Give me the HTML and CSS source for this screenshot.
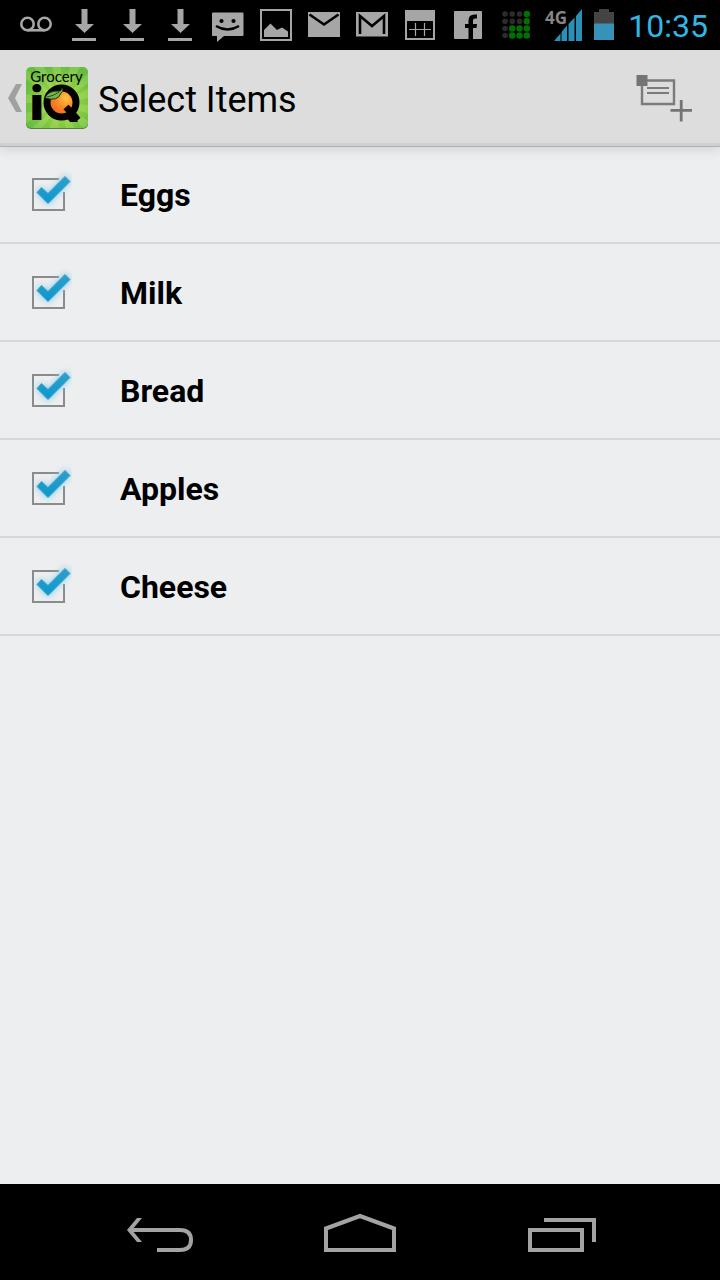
FILE: index.html
```html
<!DOCTYPE html>
<html lang="en">
<head>
<meta charset="utf-8">
<meta name="viewport" content="width=device-width, initial-scale=1">
<title>Select Items</title>
<link rel="stylesheet" href="styles.css">
</head>
<body>
<svg class="defs" width="0" height="0" aria-hidden="true">
  <defs>
    <linearGradient id="tickFill" x1="0" y1="0" x2="0" y2="1">
      <stop offset="0" stop-color="#2f9fcb"/><stop offset="1" stop-color="#0798d2"/>
    </linearGradient>
    <symbol id="download" viewBox="0 0 48 50">
      <path d="M21.500 9h6v15h6.500L24.500 33 15 24h6.500zM12 38h24v3H12z" fill="#a6a6a6"/>
    </symbol>
    <symbol id="tick" viewBox="0 0 48 48">
      <path d="M35 9h5v13" fill="none" stroke="#edeef0" stroke-width="3"/>
      <path class="glow" d="M12 22l5-5 7 6L41 5l6 6L24 35z" fill="#7fd0ee"/>
      <path d="M13 22.500l4.500-5 6.500 6L41 6.500l5 5L24 33.500z" fill="url(#tickFill)" stroke="#4d9dbb" stroke-width="1"/>
    </symbol>
  </defs>
</svg>

<div class="status">
  <svg class="cell" viewBox="0 0 48 50" fill="none" stroke="#a6a6a6" stroke-width="2.600"><circle cx="15.500" cy="24" r="6.200"/><circle cx="32.500" cy="24" r="6.200"/><path d="M15 30.300h18"/></svg>
  <svg class="cell"><use href="#download"/></svg>
  <svg class="cell"><use href="#download"/></svg>
  <svg class="cell"><use href="#download"/></svg>
  <svg class="cell" viewBox="0 0 48 50"><path d="M9 12.500h29.500q1 0 1 1V35q0 1-1 1H20l-7 6v-6H9q-1 0-1-1V13.500q0-1 1-1z" fill="#a6a6a6"/><circle cx="17.500" cy="21" r="2.100"/><circle cx="29.500" cy="21" r="2.100"/><path d="M12 26q11.500 7 23 0" fill="none" stroke="#000" stroke-width="2.400"/></svg>
  <svg class="cell" viewBox="0 0 48 50"><path d="M9 10h30v30H9z" fill="none" stroke="#a6a6a6" stroke-width="2"/><path d="M12 37v-7l6.500-6.500L25 30l5-2.500 6 4V37z" fill="#a6a6a6"/></svg>
  <svg class="cell" viewBox="0 0 48 50"><path d="M8 12h32v25H8z" fill="#a6a6a6"/><path d="M9.500 14.500L24 24.500l14.500-10" fill="none" stroke="#000" stroke-width="2.600"/></svg>
  <svg class="cell" viewBox="0 0 48 50"><path d="M8 12h32v24.500H8z" fill="#a6a6a6"/><path d="M12 34V16l12 10 12-10v18" fill="none" stroke="#000" stroke-width="2.600"/></svg>
  <svg class="cell" viewBox="0 0 48 50"><path d="M9 10h30v30H9z" fill="#a6a6a6"/><path d="M11 21h26v17H11z"/><path d="M13 29.500h22M19.500 23v13M28.500 23v13" stroke="#a6a6a6" stroke-width="1.200"/></svg>
  <svg class="cell" viewBox="0 0 48 50"><path d="M11 11h26q1 0 1 1v26q0 1-1 1H11q-1 0-1-1V12q0-1 1-1z" fill="#a6a6a6"/><path d="M24.500 39V28H21v-4h3.500v-3.500q0-6 6-6H33v4h-2q-2 0-2 2V24h4l-.5 4H29v11z"/></svg>
  <svg class="cell" viewBox="0 0 48 50"><g fill="#2b2b2b"><circle cx="13" cy="14" r="2.800"/><circle cx="20.200" cy="14" r="2.800"/><circle cx="27.500" cy="14" r="2.800"/><circle cx="13" cy="21.300" r="2.800"/><circle cx="20.200" cy="21.300" r="2.800"/><circle cx="27.500" cy="21.300" r="2.800"/><circle cx="13" cy="28.500" r="2.800"/><circle cx="13" cy="35.500" r="2.800"/></g><g fill="#007000"><circle cx="34.800" cy="14" r="3.200"/><circle cx="34.800" cy="21.300" r="3.200"/><circle cx="20.200" cy="28.500" r="3.200"/><circle cx="27.500" cy="28.500" r="3.200"/><circle cx="34.800" cy="28.500" r="3.200"/><circle cx="20.200" cy="35.500" r="3.200"/><circle cx="27.500" cy="35.500" r="3.200"/><circle cx="34.800" cy="35.500" r="3.200"/></g></svg>
  <svg class="cell" viewBox="0 0 48 50"><path d="M14 41l6.500-7.500V41zM21.500 32l5.500-6.500V41h-5.500zM28.500 24l6-6.500V41h-6zM36 16l6-7v32h-6z" fill="#2b8fb8"/><text class="net" x="5" y="24">4G</text></svg>
  <svg class="battery" viewBox="0 0 32 50"><path d="M6 12h5V9h10v3h5v12H6z" fill="#444"/><path d="M6 23.500h20V40H6z" fill="#3792b8"/></svg>
  <time class="clock">10:35</time>
</div>

<header class="bar">
  <a class="up" href="#" aria-label="Navigate up">
    <svg class="chevron" viewBox="0 0 14 28"><path d="M8 0h6L7 14l7 14H8L0 14z" fill="#a0a0a0"/></svg>
    <svg class="logo" viewBox="0 0 62 62">
      <defs>
        <radialGradient id="leafy" cx=".55" cy=".58" r=".6"><stop offset="0" stop-color="#b5df45"/><stop offset="1" stop-color="#68bd41"/></radialGradient>
        <radialGradient id="fruit" cx=".65" cy=".35" r=".65"><stop offset="0" stop-color="#ffc246"/><stop offset=".5" stop-color="#f98a25"/><stop offset="1" stop-color="#ef6421"/></radialGradient>
        <clipPath id="tile"><rect width="62" height="61" rx="5"/></clipPath>
      </defs>
      <rect y="1" width="62" height="61" rx="5" fill="#55803d"/>
      <g clip-path="url(#tile)">
        <path d="M0 0h62v61H0z" fill="url(#leafy)"/>
        <path d="M35 36L0 2v10zM35 36L8 0h10zM35 36L26 0h9zM35 36L44 0h10zM35 36l27-30v10zM35 36l27-14v9zM35 36l27 2v9zM35 36l27 18v8h-4zM35 36l14 26h-9zM35 36l-3 26h-9zM35 36L15 62H5zM35 36L0 56V46zM35 36L0 36v-9z" fill="#d5f08a" opacity=".22"/>
      </g>
      <text class="brand" x="30.500" y="15" text-anchor="middle">Grocery</text>
      <text class="iq" x="4" y="53">iQ</text>
      <circle cx="35.500" cy="35.500" r="14.500" fill="url(#fruit)" stroke="#000" stroke-width="7"/>
      <path d="M40 40l12 13" stroke="#000" stroke-width="7"/>
      <path d="M19 31q3-8 15-7 2-1 2-3l1 1q0 3-2 4-3 9-16 5z" fill="#76b64b" stroke="#17320c" stroke-width="1"/>
      <path d="M21 30q7-1 12-5" fill="none" stroke="#17320c" stroke-width=".8"/>
    </svg>
  </a>
  <h1 class="title">Select Items</h1>
  <button class="action" type="button" aria-label="Add list">
    <svg viewBox="0 0 112 96"><path d="M34 30.500h32V54H34z" fill="none" stroke="#7b7b7b" stroke-width="2.400"/><path d="M28.500 25H39.500v11H28.500z" fill="#747474"/><path d="M39 38h22M39 43h22" stroke="#7b7b7b" stroke-width="2"/><path d="M62.500 60.300h21.500M73.200 50v21.500" stroke="#747474" stroke-width="2.800"/></svg>
  </button>
</header>

<main class="content">
  <ul class="list">
    <li><label class="row"><span class="check"><input type="checkbox" checked><svg><use href="#tick"/></svg></span><span class="name">Eggs</span></label></li>
    <li><label class="row"><span class="check"><input type="checkbox" checked><svg><use href="#tick"/></svg></span><span class="name">Milk</span></label></li>
    <li><label class="row"><span class="check"><input type="checkbox" checked><svg><use href="#tick"/></svg></span><span class="name">Bread</span></label></li>
    <li><label class="row"><span class="check"><input type="checkbox" checked><svg><use href="#tick"/></svg></span><span class="name">Apples</span></label></li>
    <li><label class="row"><span class="check"><input type="checkbox" checked><svg><use href="#tick"/></svg></span><span class="name">Cheese</span></label></li>
  </ul>
</main>

<nav class="nav">
  <button type="button" aria-label="Back"><svg viewBox="0 0 80 96"><path d="M22 34h-5L7 46l10 12h5L12 46z"/><path d="M11 46h49q11 0 11 10t-11 10H37" class="line"/></svg></button>
  <button type="button" aria-label="Home"><svg viewBox="0 0 80 96"><path class="line" d="M6 44.500L40 32l34 12.500V66H6z"/></svg></button>
  <button type="button" aria-label="Recent apps"><svg viewBox="0 0 80 96"><path class="line" d="M10 46h52v20H10zM24 36h50v22"/></svg></button>
</nav>
</body>
</html>
```
FILE: styles.css
```css
* {
  box-sizing: border-box;
}

body {
  margin: 0;
  min-height: 100vh;
  display: flex;
  flex-direction: column;
  background: #edeef0;
  color: #000;
  font-family: Roboto, "Liberation Sans", sans-serif;
}

.defs {
  position: absolute;
}

svg {
  display: block;
}

button {
  border: 0;
  padding: 0;
  background: none;
  cursor: pointer;
}

.status {
  display: flex;
  align-items: center;
  height: 50px;
  padding: 0 12px;
  background: #000;
}

.cell {
  width: 48px;
  height: 50px;
  flex: none;
}

.battery {
  width: 32px;
  height: 50px;
  flex: none;
}

.net {
  font: 700 17px "Open Sans", sans-serif;
  fill: #858585;
}

.clock {
  margin-left: auto;
  padding-top: 2px;
  font-size: 32px;
  line-height: 48px;
  color: #33b5e5;
}

.bar {
  position: relative;
  display: flex;
  align-items: center;
  height: 96px;
  padding-left: 8px;
  background: #ddd;
  box-shadow: inset 0 -3px 0 #d0d0d0, 0 1px 0 #b0b1b2, 0 2px 12px rgba(0, 0, 0, 0.15);
}

.up {
  display: flex;
  align-items: center;
  gap: 4px;
}

.chevron {
  width: 14px;
  height: 28px;
}

.logo {
  width: 62px;
  height: 62px;
  overflow: visible;
}

.brand {
  font: 400 15px Lato, sans-serif;
}

.iq {
  font: 900 46px Inter, sans-serif;
}

.title {
  flex: 1;
  margin: 0 0 0 10px;
  padding-top: 3px;
  font-size: 36px;
  font-weight: 400;
  line-height: 48px;
}

.action svg {
  width: 112px;
  height: 96px;
}

.content {
  flex: 1;
}

.list {
  margin: 0;
  padding: 0;
  list-style: none;
}

.row {
  display: flex;
  align-items: center;
  gap: 48px;
  height: 98px;
  padding: 0 24px;
  border-bottom: 2px solid #d5d6d8;
}

.check {
  display: grid;
  width: 48px;
  height: 48px;
}

.check input,
.check svg {
  grid-area: 1 / 1;
}

.check input {
  appearance: none;
  width: 33px;
  height: 33px;
  margin: 8px 0 0 8px;
  border: 2px solid #8b8b8c;
}

.check svg {
  width: 48px;
  height: 48px;
  z-index: 1;
  pointer-events: none;
  visibility: hidden;
}

.check input:checked + svg {
  visibility: visible;
}

.glow {
  filter: blur(3px);
}

.name {
  padding-top: 2px;
  font-size: 32px;
  font-weight: 700;
  line-height: 40px;
}

.nav {
  display: flex;
  height: 96px;
  padding: 0 60px;
  background: #000;
}

.nav button {
  flex: 1;
  display: flex;
  justify-content: center;
}

.nav svg {
  width: 80px;
  height: 96px;
  fill: #a3a3a3;
}

.nav .line {
  fill: none;
  stroke: #a3a3a3;
  stroke-width: 4px;
}
```
